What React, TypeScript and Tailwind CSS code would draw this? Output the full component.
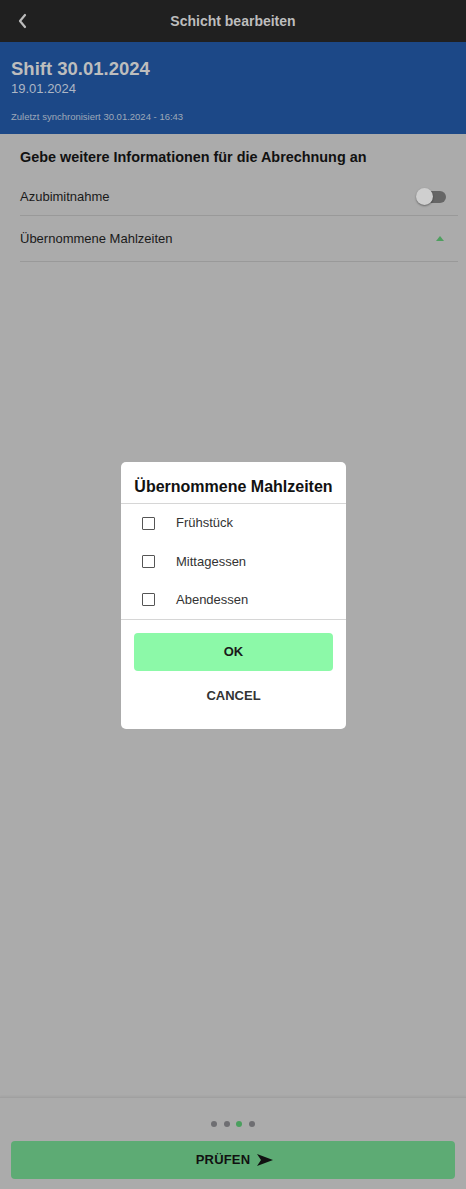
import React from "react";

const font = { fontFamily: '"Liberation Sans", Arial, sans-serif' };

function Checkbox() {
  return <div className="w-[13px] h-[13px] border border-[#555] rounded-[1px] bg-white shrink-0" />;
}

export default function App() {
  return (
    <div className="w-[466px] h-[1189px] bg-[#ababab] flex flex-col relative overflow-hidden" style={font}>
      {/* top bar */}
      <div className="h-[42px] bg-[#202020] flex items-center relative shrink-0">
        <svg className="absolute left-[17px] top-[13px]" width="10" height="16" viewBox="0 0 10 16">
          <path d="M8 2 L3 8 L8 14" stroke="#bcbcbc" strokeWidth="2.2" fill="none" strokeLinecap="round" strokeLinejoin="round" />
        </svg>
        <div className="w-full text-center text-[14px] font-bold text-[#bdbdbd]">Schicht bearbeiten</div>
      </div>
      {/* blue header */}
      <div className="h-[92px] bg-[#1c4887] px-[11px] pt-[16px] shrink-0">
        <div className="text-[18.5px] font-bold text-[#bdbdbd] leading-[22px]">Shift 30.01.2024</div>
        <div className="text-[13px] text-[#adb6c4] leading-[16px] mt-[1px]">19.01.2024</div>
        <div className="text-[9.5px] text-[#9ea8b8] leading-[12px] mt-[14px]">Zuletzt synchronisiert 30.01.2024 - 16:43</div>
      </div>
      {/* content */}
      <div className="px-[20px] pr-[8px] flex-1">
        <div className="text-[14.4px] font-bold text-[#111] mt-[15px] leading-[17px]">Gebe weitere Informationen für die Abrechnung an</div>
        <div className="h-[44px] pt-[6px] flex items-center justify-between border-b border-[#999] mt-[6px]">
          <span className="text-[13px] text-[#1a1a1a]">Azubimitnahme</span>
          <div className="relative w-[30px] h-[12px] mr-[12px]">
            <div className="absolute left-[4px] top-0 w-[26px] h-[12px] rounded-full bg-[#666]" />
            <div className="absolute left-0 top-[-3px] w-[17px] h-[17px] rounded-full bg-[#cfcfcf] shadow-[0_1px_2px_rgba(0,0,0,0.4)]" />
          </div>
        </div>
        <div className="h-[46px] flex items-center justify-between border-b border-[#999]">
          <span className="text-[13px] text-[#1a1a1a]">Übernommene Mahlzeiten</span>
          <svg className="mr-[14px]" width="8" height="5" viewBox="0 0 8 5">
            <path d="M0 5 L4 0 L8 5 Z" fill="#4e9f5f" />
          </svg>
        </div>
      </div>
      {/* footer */}
      <div className="h-[92px] border-t border-[#a0a0a0] shadow-[0_-1px_2px_rgba(0,0,0,0.05)] shrink-0 flex flex-col items-center">
        <div className="flex gap-[6.5px] mt-[23px]">
          <div className="w-[6px] h-[6px] rounded-full bg-[#6e6e72]" />
          <div className="w-[6px] h-[6px] rounded-full bg-[#6e6e72]" />
          <div className="w-[6px] h-[6px] rounded-full bg-[#4a9f5e]" />
          <div className="w-[6px] h-[6px] rounded-full bg-[#6e6e72]" />
        </div>
        <div className="mt-[14px] w-[444px] h-[38px] rounded-[4px] bg-[#5dab74] flex items-center justify-center gap-[6px] pl-[4px]">
          <span className="text-[13px] font-bold text-[#111] tracking-[0.2px]">PRÜFEN</span>
          <svg width="18" height="14" viewBox="0 0 18 14">
            <path d="M1 1 L17 7 L1 13 L5 7 Z" fill="#111" />
          </svg>
        </div>
      </div>
      {/* modal */}
      <div className="absolute left-[121px] top-[462px] w-[225px] h-[267px] bg-white rounded-[5px] flex flex-col">
        <div className="h-[42px] flex items-center justify-center border-b border-[#d6d6d6] pt-[9px] shrink-0">
          <span className="text-[16px] font-bold text-[#111]">Übernommene Mahlzeiten</span>
        </div>
        <div className="h-[116px] flex flex-col border-b border-[#d6d6d6] shrink-0">
          {["Frühstück", "Mittagessen", "Abendessen"].map((t) => (
            <div key={t} className="h-[38.5px] flex items-center pl-[21px]">
              <Checkbox />
              <span className="ml-[21px] text-[13px] text-[#333]">{t}</span>
            </div>
          ))}
        </div>
        <div className="mx-[13px] mt-[13px] h-[38px] rounded-[4px] bg-[#8cf9a8] flex items-center justify-center shrink-0">
          <span className="text-[13px] font-bold text-[#1a1a1a]">OK</span>
        </div>
        <div className="h-[50px] flex items-center justify-center shrink-0">
          <span className="text-[13px] font-bold text-[#333]">CANCEL</span>
        </div>
      </div>
    </div>
  );
}
